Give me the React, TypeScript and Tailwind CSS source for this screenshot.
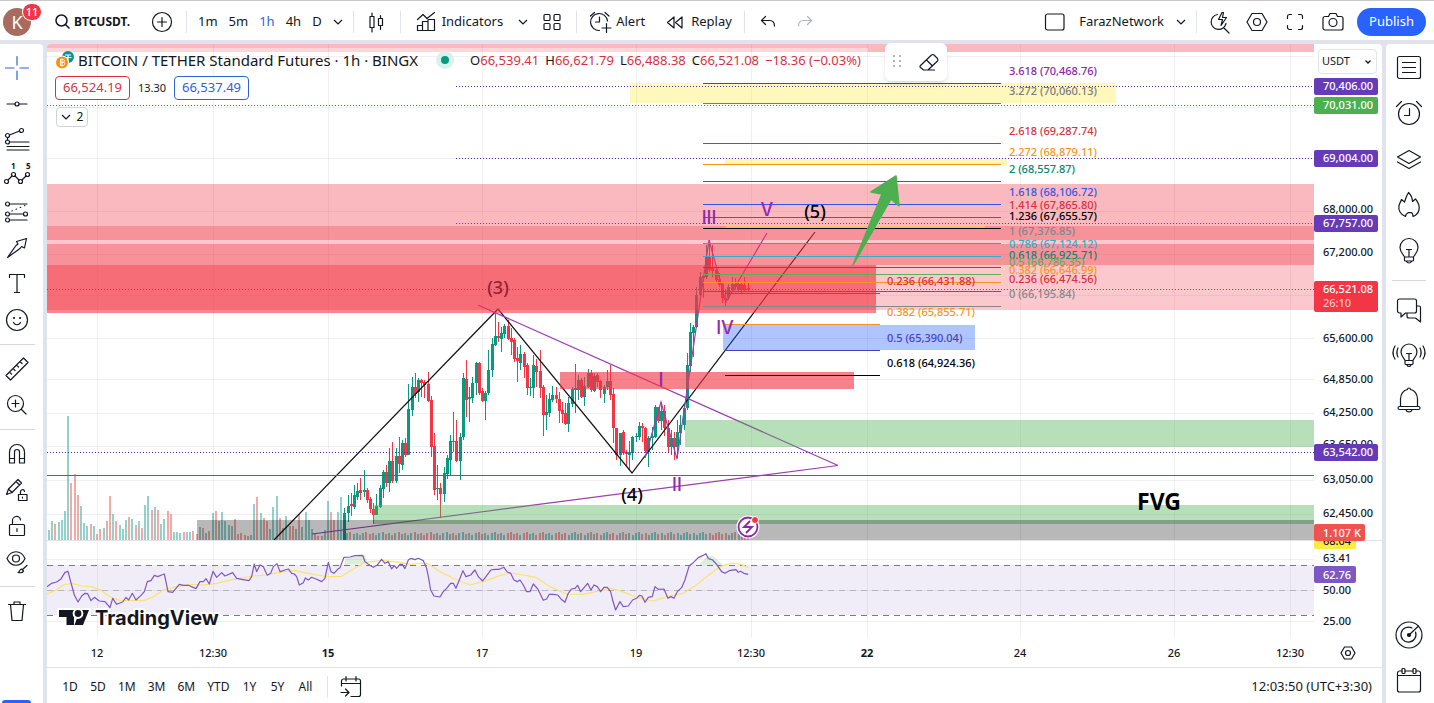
import React from 'react';

type IconProps = { children: React.ReactNode; size?: number; className?: string; width?: number };

function Icon({ children, size = 28, className = '', width = 1.2 }: IconProps) {
  return (
    <svg
      width={size}
      height={size}
      viewBox="0 0 28 28"
      fill="none"
      stroke="currentColor"
      strokeWidth={width}
      strokeLinecap="round"
      strokeLinejoin="round"
      className={`shrink-0 overflow-visible ${className}`}
      aria-hidden="true"
    >
      {children}
    </svg>
  );
}

function Chevron({ className = '' }: { className?: string }) {
  return (
    <svg width="10" height="6" viewBox="0 0 10 6" fill="none" stroke="currentColor" strokeWidth="1.2" className={`shrink-0 ${className}`} aria-hidden="true">
      <path d="M1 1l4 4 4-4" />
    </svg>
  );
}

function Divider({ className = '' }: { className?: string }) {
  return <span className={`h-[22px] w-px shrink-0 bg-[#e0e3eb] ${className}`} />;
}

// ---------------------------------------------------------------- chart data

// Candles as [open, high, low, close], in thirds of a pixel below y = 270
const CANDLES: [number, number, number, number][] = [
  [810, 715, 810, 730], [730, 675, 755, 707], [703, 670, 737, 709], [710, 645, 718, 676],
  [680, 640, 690, 663], [660, 625, 690, 668], [665, 600, 680, 660], [660, 655, 700, 690],
  [688, 680, 730, 718], [716, 700, 762, 735], [735, 672, 735, 708], [710, 645, 715, 655],
  [658, 600, 685, 605], [605, 585, 650, 640], [640, 535, 665, 573], [573, 515, 640, 633],
  [633, 535, 640, 558], [558, 500, 610, 583], [585, 510, 600, 519], [519, 505, 560, 555],
  [555, 342, 555, 418], [420, 320, 437, 350], [352, 308, 385, 372], [365, 325, 395, 330],
  [330, 328, 380, 338], [337, 330, 385, 345], [342, 305, 395, 392], [390, 378, 560, 530],
  [528, 490, 675, 660], [658, 585, 690, 655], [655, 640, 745, 672], [672, 590, 695, 608],
  [612, 555, 628, 565], [570, 495, 615, 512], [512, 427, 545, 516], [514, 450, 575, 572],
  [572, 490, 630, 500], [502, 310, 510, 325], [327, 270, 440, 390], [388, 350, 455, 380],
  [385, 320, 400, 340], [340, 275, 375, 278], [280, 275, 375, 368], [362, 355, 395, 392],
  [392, 362, 450, 368], [370, 240, 375, 300], [300, 205, 320, 222], [225, 128, 228, 198],
  [198, 155, 215, 204], [208, 170, 245, 188], [192, 163, 205, 168], [168, 150, 210, 206],
  [205, 175, 255, 215], [210, 205, 275, 268], [265, 230, 335, 272], [278, 225, 300, 252],
  [253, 245, 325, 290], [285, 280, 375, 353], [355, 325, 378, 350], [353, 255, 383, 285],
  [287, 268, 350, 305], [303, 240, 385, 353], [350, 345, 497, 435], [436, 375, 480, 426],
  [430, 370, 440, 388], [390, 348, 395, 375], [375, 350, 400, 388], [387, 365, 460, 422],
  [420, 395, 460, 432], [430, 400, 465, 462], [462, 380, 487, 400], [402, 350, 410, 358],
  [360, 283, 430, 355], [360, 315, 390, 330], [330, 325, 385, 380], [380, 320, 408, 348],
  [350, 298, 355, 308], [308, 300, 365, 360], [362, 310, 365, 318], [316, 310, 350, 335],
  [333, 330, 385, 360], [372, 345, 400, 350], [352, 300, 360, 333], [333, 285, 390, 375],
  [373, 355, 520, 475], [475, 475, 570, 555], [555, 488, 588, 488], [487, 480, 555, 548],
  [546, 540, 590, 553], [555, 512, 600, 547], [550, 498, 570, 500], [502, 490, 515, 498],
  [500, 455, 510, 467], [467, 460, 515, 475], [474, 472, 550, 543], [545, 498, 590, 503],
  [503, 470, 540, 498], [500, 405, 505, 412], [412, 410, 460, 452], [453, 396, 480, 423],
  [423, 405, 498, 474], [474, 450, 546, 531], [531, 480, 555, 504], [504, 486, 570, 531],
  [531, 450, 564, 486], [490, 435, 525, 465], [465, 400, 480, 414], [414, 250, 420, 285],
  [287, 160, 305, 187], [190, 165, 260, 170], [172, 50, 175, 75], [75, 5, 90, 22],
  [25, 12, 85, 18], [22, -75, 28, -40], [-40, -90, 5, 0], [-5, -75, 20, 3],
  [0, -5, 40, 30], [28, 10, 50, 45], [43, 35, 100, 85], [85, 60, 107, 90],
  [85, 43, 90, 50], [60, 22, 65, 43], [42, 25, 60, 50], [60, 30, 65, 43],
  [43, 35, 72, 60], [45, 22, 63, 60], [53, 40, 62, 60],
];

// Volume of the bars before the first candle; negative is a falling bar
const VOLUME = [
  30, 57, -48, 55, 60, 87, 372, -172, -198, -134, 102, 52, 42, -48, 42, -18, -33, 36, -58, -132, 78, -57, 45,
  32, 60, -70, 62, -45, 58, -35, 105, 132, -90, 99, -90, 48, 63, -87, -79, 24, 24, 22, -24, 24, 24, -28, -18,
  40, -36, 22, -27, 80, -87, 58, 84, 58, 45, 42, -64, -18, -21, -15, -12, 15, 109, -129, 82, -67, -58, 32, 100,
  132, -67, 36, 72, -42, -42, 34, -77, 39, 85, 60, 32, -18, -12, -12, 30, 117, -84, -60, 85, 130,
];

const RSI =
  '21,560 35,550 50,546 62,538 75,517 84,514 92,545 103,585 114,606 125,588 135,580 143,581 153,602 163,592 178,603 195,605 210,623 218,595 230,613 248,606 258,592 266,600 277,580 288,600 303,586 313,575 322,545 333,542 343,526 353,530 363,526 373,522 384,575 398,577 418,553 430,556 445,556 468,566 480,545 490,545 498,536 508,552 519,514 530,532 545,518 555,528 578,518 590,535 605,538 627,542 635,530 643,492 650,515 660,495 670,500 682,526 692,520 700,500 711,491 720,515 735,510 745,507 755,520 763,522 770,530 778,555 790,548 796,534 805,540 815,532 830,538 845,545 855,535 865,487 873,515 882,520 893,508 900,503 912,472 930,471 945,467 968,466 975,485 985,493 1000,502 1012,495 1025,478 1035,490 1045,485 1055,507 1063,497 1070,505 1080,493 1087,493 1095,506 1105,480 1113,475 1125,479 1135,475 1150,482 1160,505 1167,540 1172,570 1182,588 1200,591 1210,575 1220,565 1232,550 1240,550 1248,565 1258,540 1269,512 1278,530 1292,525 1305,510 1315,530 1328,543 1338,530 1353,510 1365,508 1378,508 1392,502 1402,516 1412,520 1422,540 1432,545 1440,540 1450,555 1460,575 1470,575 1480,552 1492,565 1500,580 1510,601 1520,597 1528,583 1540,583 1553,585 1563,597 1575,607 1585,580 1595,567 1605,565 1613,556 1622,575 1633,562 1643,550 1653,570 1662,555 1672,560 1682,575 1692,562 1702,562 1712,575 1718,600 1727,630 1740,605 1750,620 1765,618 1778,600 1790,595 1798,586 1806,588 1815,607 1825,592 1837,590 1845,560 1855,568 1872,567 1884,595 1893,590 1902,595 1912,575 1925,563 1935,540 1948,497 1960,488 1975,473 1988,467 1998,461 2005,475 2018,480 2030,493 2045,515 2055,520 2068,512 2088,509 2095,517 2102,514 2112,520 2125,523';

const RSI_AVERAGE =
  '21,582 45,572 70,555 95,550 125,558 155,560 185,572 215,593 240,601 310,602 335,593 370,570 410,560 450,553 490,555 530,550 580,538 640,528 680,525 720,517 765,511 790,517 830,525 860,530 905,529 935,510 975,488 1025,481 1065,485 1110,493 1160,489 1200,515 1240,535 1290,555 1330,545 1380,527 1410,519 1450,525 1490,533 1530,560 1580,582 1630,583 1680,572 1710,565 1740,572 1790,592 1840,603 1880,590 1930,580 1970,555 2000,530 2040,500 2075,489 2105,494 2125,503';

const RED = '#f23645';
const CRIMSON = '#d9303f';
const GREEN = '#4caf50';
const YELLOW = '#ffeb3b';
const VIOLET = '#4a2a9c';

// x, y, width, height, colour, opacity
const BANDS: [number, number, number, number, string, number][] = [
  [47, 44, 1267, 4, RED, 0.35],
  [868, 48, 446, 4, RED, 0.35],
  [47, 48, 821, 4, RED, 0.2],
  [47, 184, 1267, 42, RED, 0.35],
  [47, 226, 1267, 14, RED, 0.54],
  [47, 240, 1267, 4, RED, 0.27],
  [47, 244, 1267, 21, RED, 0.54],
  [47, 265, 829, 45, RED, 0.73],
  [876, 265, 438, 45, RED, 0.27],
  [47, 310, 829, 3, RED, 0.6],
  [560, 372, 294, 17, RED, 0.62],
  [630, 83, 486, 20, YELLOW, 0.35],
  [725, 159, 282, 6, YELLOW, 0.4],
  [726, 225, 259, 3, '#ffd54f', 0.6],
  [723, 325, 252, 25, '#2962ff', 0.37],
  [685, 420, 629, 27, GREEN, 0.4],
  [373, 505, 941, 19, GREEN, 0.4],
  [197, 520, 1117, 20, '#000000', 0.28],
];

// line y, label y, colour, label
const UPPER_FIB: [number, number, string, string][] = [
  [83, 71, '#8e24aa', '3.618 (70,468.76)'],
  [103, 91, '#787b86', '3.272 (70,060.13)'],
  [143, 131, CRIMSON, '2.618 (69,287.74)'],
  [164, 152, '#f7941d', '2.272 (68,879.11)'],
  [181, 169, '#088673', '2 (68,557.87)'],
  [204, 192, '#3355e8', '1.618 (68,106.72)'],
  [217, 205, CRIMSON, '1.414 (67,865.80)'],
  [228, 216, '#000000', '1.236 (67,655.57)'],
  [243, 231, '#85858e', '1 (67,376.85)'],
  [256, 244, '#2cb0cc', '0.786 (67,124.12)'],
  [267, 255, '#14806f', '0.618 (66,925.71)'],
  [274, 262, '#5fae58', '0.5 (66,786.35)'],
  [282, 270, '#f7941d', '0.382 (66,646.99)'],
  [291, 279, CRIMSON, '0.236 (66,474.56)'],
  [306, 294, '#85858e', '0 (66,195.84)'],
];

const LOWER_FIB: [number, number, string, string][] = [
  [293, 281, CRIMSON, '0.236 (66,431.88)'],
  [324, 312, '#f7941d', '0.382 (65,855.71)'],
  [350, 338, '#4a3fc0', '0.5 (65,390.04)'],
  [375, 363, '#000000', '0.618 (64,924.36)'],
];

const DOTTED: [number, number, string][] = [
  [456, 86, VIOLET],
  [47, 105, '#388e3c'],
  [456, 158, VIOLET],
  [456, 223, '#8e24aa'],
  [47, 289, CRIMSON],
  [47, 452, VIOLET],
];

const PRICES: [number, string][] = [
  [209, '68,000.00'], [252, '67,200.00'], [338, '65,600.00'], [379, '64,850.00'], [412, '64,250.00'],
  [444, '63,650.00'], [479, '63,050.00'], [513, '62,450.00'], [558, '63.41'], [590, '50.00'], [621, '25.00'],
];

const PRICE_TAGS: [number, string, string][] = [
  [86, '70,406.00', '#673ab7'],
  [105, '70,031.00', '#4caf50'],
  [158, '69,004.00', '#673ab7'],
  [223, '67,757.00', '#673ab7'],
  [452, '63,542.00', '#673ab7'],
];

const TIMES: [number, string, boolean][] = [
  [97, '12', false], [213, '12:30', false], [328, '15', true], [482, '17', false], [636, '19', false],
  [751, '12:30', false], [867, '22', true], [1020, '24', false], [1174, '26', false], [1290, '12:30', false],
];

const WAVES: [number, number, string, string][] = [
  [498, 294, '(3)', '#96202f'],
  [632, 501, '(4)', '#000000'],
  [815, 218, '(5)', '#000000'],
];

const SUB_WAVES: [number, number, string][] = [
  [661, 386, 'I'], [677, 491, 'II'], [709, 224, 'III'], [725, 334, 'IV'], [767, 216, 'V'],
];

// ---------------------------------------------------------------- chart

function Candles() {
  return (
    <g shapeRendering="crispEdges">
      {CANDLES.map(([open, high, low, close], i) => {
        const x = Math.round(344.3 + i * 3.2);
        const y = (v: number) => Math.round(270 + v / 3);
        const color = close < open ? '#089981' : RED;
        const top = y(Math.min(open, close));
        const bottom = y(Math.max(open, close));
        return (
          <g key={i} fill={color}>
            <rect x={x} y={y(high)} width={1} height={y(low) - y(high)} />
            <rect x={x - 1} y={top} width={3} height={Math.max(bottom - top, 1)} />
          </g>
        );
      })}
    </g>
  );
}

function VolumeBars() {
  const later = CANDLES.map(([open, , , close], i) => (16 + ((i * 7) % 5) * 2) * (close < open ? 1 : -1));
  return (
    <g shapeRendering="crispEdges" opacity={0.5}>
      {[...VOLUME, ...later].map((v, i) => {
        const h = Math.round(Math.abs(v) / 3);
        return <rect key={i} x={Math.round(48 + i * 3.207)} y={540 - h} width={2} height={h} fill={v > 0 ? '#26a69a' : '#ef5350'} />;
      })}
    </g>
  );
}

function Fib({ rows, x, width, labelX }: { rows: [number, number, string, string][]; x: number; width: number; labelX: number }) {
  return (
    <g>
      {rows.map(([y, labelY, color, label]) => (
        <g key={label}>
          <rect x={x} y={y} width={width} height={1} fill={color} shapeRendering="crispEdges" />
          <text x={labelX} y={labelY + 4} fill={color}>{label}</text>
        </g>
      ))}
    </g>
  );
}

function Rsi() {
  return (
    <g fill="none">
      <rect x={47} y={565} width={1267} height={50} fill="#7e57c2" fillOpacity={0.11} />
      <g strokeDasharray="6 5" shapeRendering="crispEdges">
        <path d="M47 565.5h1267M47 615.5h1267" stroke="#787b86" />
        <path d="M47 590.5h1267" stroke="#b5b4c2" />
      </g>
      <path d="M344 565l2-7 19-3 3 9zM699 565l8-9 6 0 10 9z" fill="#4caf50" fillOpacity={0.2} />
      <g transform="translate(40 400) scale(0.3333)" strokeWidth={3.6} strokeLinejoin="round">
        <polyline points={RSI_AVERAGE} stroke="#fbe36a" />
        <polyline points={RSI} stroke="#7e57c2" />
      </g>
    </g>
  );
}

function PriceAxis() {
  return (
    <g fontSize={11} fontWeight={500} fill="#131722">
      {PRICES.map(([y, label]) => (
        <text key={label} x={1323} y={y + 4}>{label}</text>
      ))}
      {PRICE_TAGS.map(([y, label, color]) => (
        <g key={label}>
          <rect x={1314} y={y - 8} width={64} height={17} rx={2} fill={color} />
          <text x={1323} y={y + 4} fill="#fff">{label}</text>
        </g>
      ))}
      <rect x={1314} y={281} width={64} height={31} rx={2} fill={RED} />
      <text x={1323} y={293} fill="#fff">66,521.08</text>
      <text x={1323} y={307} fill="#fff" fillOpacity={0.7}>26:10</text>
      <rect x={1314} y={533} width={42} height={16} rx={2} fill={YELLOW} />
      <text x={1323} y={545}>68.04</text>
      <rect x={1314} y={524} width={51} height={17} rx={2} fill="#ef5350" />
      <text x={1323} y={537} fill="#fff">1.107 K</text>
      <rect x={1314} y={566} width={42} height={17} rx={2} fill="#7e57c2" />
      <text x={1323} y={579} fill="#fff">62.76</text>
    </g>
  );
}

function Chart() {
  return (
    <svg viewBox="47 44 1335 623" className="h-auto w-full font-['Noto_Sans','Open_Sans',sans-serif]" role="img" aria-label="BTCUSDT one hour chart">
      <g fill="#2a2e39" fillOpacity={0.07} shapeRendering="crispEdges">
        {TIMES.map(([x]) => <rect key={x} x={x} y={44} width={1} height={594} />)}
        {[56, 107, 158, 211, 254, 295, 338, 379, 413, 446, 480, 514, 559, 590, 621].map((y) => (
          <rect key={y} x={47} y={y} width={1267} height={1} />
        ))}
      </g>
      <VolumeBars />
      <Candles />

      <g fill="none" strokeWidth={1.2}>
        <path d="M274 540L498 309 632 473 815 232" stroke="#111" />
        <path d="M478 305l360 160.500M312 534l526-68.500" stroke="#9c3fb0" />
        <path d="M645 458l16-56 16 57 32-219 17 62 41-69" stroke="#9c3fb0" />
      </g>
      <rect x={47} y={475} width={1267} height={1} fill={CRIMSON} shapeRendering="crispEdges" />

      <g shapeRendering="crispEdges">
        {BANDS.map(([x, y, w, h, color, opacity], i) => (
          <rect key={i} x={x} y={y} width={w} height={h} fill={color} fillOpacity={opacity} />
        ))}
      </g>
      <g shapeRendering="crispEdges" strokeDasharray="1 2">
        {DOTTED.map(([x, y, color]) => (
          <line key={y} x1={x} x2={1314} y1={y + 0.5} y2={y + 0.5} stroke={color} />
        ))}
      </g>

      <g fontSize={11} fontWeight={500}>
        <Fib rows={UPPER_FIB} x={703} width={298} labelX={1009} />
        <Fib rows={LOWER_FIB} x={725} width={155} labelX={887} />
      </g>
      <path d="M853 265L882 194 871 192 896 176 899 206 891 199z" fill={GREEN} stroke={GREEN} strokeWidth={1.5} strokeLinejoin="round" />

      <g fontSize={18} textAnchor="middle">
        {WAVES.map(([x, y, label, color]) => <text key={label} x={x} y={y} fill={color} fontWeight={500}>{label}</text>)}
        <g fill="#9227b0" fontWeight={500}>
          {SUB_WAVES.map(([x, y, label]) => (
            <text key={label} x={x} y={y} className="font-['Inter',sans-serif]">{label}</text>
          ))}
        </g>
      </g>
      <text x={1159} y={510} fontSize={23} fontWeight={700} textAnchor="middle">FVG</text>

      <circle cx={748} cy={527} r={11.500} fill="#fff" />
      <circle cx={748} cy={527} r={9.500} fill="#fff" stroke="#8e24aa" strokeWidth={1.800} />
      <path d="M750 521l-6 6h8l-6 6" fill="none" stroke="#8e24aa" strokeWidth={1.800} />
      <circle cx={755} cy={520} r={3.500} fill={RED} stroke="#fff" />

      <Rsi />
      <rect x={47} y={540} width={1335} height={1} fill="#e0e3eb" />
      <PriceAxis />

      <g fontSize={11} textAnchor="middle" fill="#131722">
        {TIMES.map(([x, label, bold]) => (
          <text key={x} x={x} y={657} fontWeight={bold ? 700 : 500}>{label}</text>
        ))}
      </g>

      <g fill="#131722" stroke="#fff" strokeWidth={4} strokeLinejoin="round" paintOrder="stroke">
        <path d="M59 610h15v15h-7.500v-8H59zM80 610h9l-6 15h-8.500z" />
        <circle cx={78} cy={613.500} r={3.400} />
        <text x={95} y={625} fontSize={20} fontWeight={700} className="font-['Inter',sans-serif]">TradingView</text>
      </g>
    </svg>
  );
}

function Ohlc({ name, value }: { name: string; value: string }) {
  return <span className="text-[#131722]">{name}<span className="text-[#d9303f]">{value}</span></span>;
}

function Legend() {
  return (
    <div className="absolute top-[5px] left-2 flex flex-col items-start text-[#131722]">
      <div className="flex h-[22px] items-center whitespace-nowrap">
        <svg width="20" height="20" viewBox="0 0 20 20" aria-hidden="true">
          <circle cx="13" cy="7" r="6" fill="#0b9393" />
          <path d="M10 5h6M13 5v5M9.500 7.500h7" stroke="#fff" strokeWidth="1.200" />
          <circle cx="7" cy="12.500" r="7" fill="#fff" />
          <circle cx="7" cy="12.500" r="6" fill="#f7931a" />
          <path d="M5.500 9.500v6M5 9.500h3c2 0 2 2.800 0 2.800H6M8 12.300c2.300 0 2 3.200 0 3.200H5M7 8.500v8" stroke="#fff" fill="none" strokeWidth=".9" />
        </svg>
        <h1 className="ml-[3px] text-[15px]">BITCOIN / TETHER Standard Futures · 1h · BINGX</h1>
        <span className="ml-[18px] flex size-[18px] items-center justify-center rounded-full bg-[#d9f1ec]">
          <span className="size-2 rounded-full bg-[#089981]" />
        </span>
        <div className="ml-4 flex gap-1.5 pt-0.5 text-[13px]">
          <Ohlc name="O" value="66,539.41" />
          <Ohlc name="H" value="66,621.79" />
          <Ohlc name="L" value="66,488.38" />
          <Ohlc name="C" value="66,521.08" />
          <span className="text-[#d9303f]">−18.36 (−0.03%)</span>
        </div>
      </div>
      <div className="mt-[5px] flex items-center text-[13px]">
        <button className="h-6 w-[75px] rounded border border-[#d9303f] bg-white text-[#d9303f]">66,524.19</button>
        <span className="w-11 text-center text-[11px]">13.30</span>
        <button className="h-6 w-[75px] rounded border border-[#2f62d9] bg-white text-[#2f5fe0]">66,537.49</button>
      </div>
      <button className="mt-[7px] ml-px flex h-5 w-8 items-center justify-center gap-1.5 rounded-sm border border-[#d1d4dc] bg-white text-xs">
        <Chevron />2
      </button>
    </div>
  );
}

// ---------------------------------------------------------------- bars

function TopBar() {
  return (
    <header className="flex h-10 shrink-0 items-center border-t border-[#c9c9c9] bg-white pt-0.5 text-[13px] whitespace-nowrap">
      <button className="relative ml-[3px] size-7 shrink-0 rounded-full bg-[#a56c5f] text-lg text-white" aria-label="Account">
        K
        <span className="absolute -top-1 left-5 flex h-4 w-[18px] items-center justify-center rounded-full bg-[#f23645] text-[11px] font-medium ring-1 ring-white">11</span>
      </button>
      <button className="ml-6 flex w-[78px] items-center gap-1 text-xs font-bold">
        <svg width="15" height="15" viewBox="0 0 15 15" fill="none" stroke="currentColor" strokeWidth="1.500" className="shrink-0" aria-hidden="true">
          <circle cx="6.500" cy="6.500" r="5.500" /><path d="M10.500 10.500l4 4" />
        </svg>
        BTCUSDT.
      </button>
      <button className="ml-[15px]" aria-label="Compare">
        <Icon><circle cx="14" cy="14" r="9.500" /><path d="M14 9.500v9M9.500 14h9" /></Icon>
      </button>
      <Divider className="ml-2.5" />
      <nav className="ml-[11px] flex items-center gap-[11px]" aria-label="Interval">
        <button>1m</button>
        <button>5m</button>
        <button className="text-[#2f62e8]">1h</button>
        <button>4h</button>
        <button>D</button>
        <button aria-label="More intervals"><Chevron /></button>
      </nav>
      <Divider className="ml-2.5" />
      <button className="ml-2" aria-label="Candles">
        <Icon>
          <path d="M8 8.500h4v11H8zM10 5v3.500M10 19.500V24M16.500 10.500h4v7h-4zM18.500 7.500v3M18.500 17.500v4" />
        </Icon>
      </button>
      <Divider className="ml-2.5" />
      <button className="ml-[11px] flex items-center gap-0.5">
        <Icon><path d="M5.500 11.500l5.500-5 4 4 7.500-6M5.500 22.500v-5h5v5zM10.500 22.500v-9h5.500v9M16 16.500h0M16 22.500v-11h6.500v11zM5.500 22.500h17" /></Icon>
        Indicators
      </button>
      <button className="ml-[15px]" aria-label="Favorite indicators"><Chevron /></button>
      <button className="ml-2.5" aria-label="Templates">
        <Icon>
          <rect x="6" y="6.500" width="6" height="6" rx="1" /><rect x="16" y="6.500" width="6" height="6" rx="1" />
          <rect x="6" y="15.500" width="6" height="6" rx="1" /><rect x="16" y="15.500" width="6" height="6" rx="1" />
        </Icon>
      </button>
      <Divider className="ml-2.5" />
      <button className="ml-[9px] flex items-center gap-0.5">
        <Icon>
          <path d="M21.500 13a8.500 8.500 0 1 0-8 9.500M13.500 9v5h-4M4.500 8l4-3.500M19 4.500L23 8M20.500 15.500v9M16 20h9" />
        </Icon>
        Alert
      </button>
      <button className="ml-4 flex items-center gap-0.5">
        <Icon><path d="M13 9v11l-6.500-5.500zM21 9v11l-6.500-5.500z" /></Icon>
        Replay
      </button>
      <Divider className="ml-3" />
      <button className="ml-[9px]" aria-label="Undo">
        <Icon><path d="M11.500 8.500L7.500 12.500l4 4M7.500 12.500h8c3 0 5 2 5 5.500" /></Icon>
      </button>
      <button className="ml-[9px] text-[#b2b5be]" aria-label="Redo">
        <Icon><path d="M16.500 8.500l4 4-4 4M20.500 12.500h-8c-3 0-5 2-5 5.500" /></Icon>
      </button>
      <div className="ml-auto flex items-center">
        <button aria-label="Layout setup">
          <Icon><rect x="4.500" y="6" width="18.500" height="16" rx="2" /></Icon>
        </button>
        <button className="ml-2.5 flex items-center gap-3">FarazNetwork<Chevron /></button>
        <Divider className="ml-2.5" />
        <div className="ml-2 flex gap-2.5">
          <button aria-label="Quick search">
            <Icon><path d="M12.500 6.500a7.500 7.500 0 1 0 8.500 9M19 20l5 5M17 4.500l-3.500 7h4l-1.500 6 5.500-8h-4l1-5z" /></Icon>
          </button>
          <button aria-label="Settings">
            <Icon><path d="M9 5.500h10l5 8.500-5 8.500H9L4 14z" /><circle cx="14" cy="14" r="3.500" /></Icon>
          </button>
          <button aria-label="Fullscreen">
            <Icon><path d="M6.500 10.500v-2a2 2 0 0 1 2-2h2M17.500 6.500h2a2 2 0 0 1 2 2v2M21.500 17.500v2a2 2 0 0 1-2 2h-2M10.500 21.500h-2a2 2 0 0 1-2-2v-2" /></Icon>
          </button>
          <button aria-label="Take a snapshot">
            <Icon><path d="M9.500 8.500l1.500-3h6l1.500 3H22a2 2 0 0 1 2 2V20a2 2 0 0 1-2 2H6a2 2 0 0 1-2-2v-9.500a2 2 0 0 1 2-2z" /><circle cx="14" cy="14.500" r="4" /></Icon>
          </button>
        </div>
        <button className="mr-2 ml-2.5 h-7 w-[69px] rounded-full bg-[#2962ff] text-[13px] text-white">Publish</button>
      </div>
    </header>
  );
}

function ToolButton({ label, className = '', children }: { label: string; className?: string; children: React.ReactNode }) {
  return (
    <button aria-label={label} className={`flex h-9 w-[34px] shrink-0 items-center justify-center ${className}`}>
      <Icon>{children}</Icon>
    </button>
  );
}

function ToolDivider() {
  return <span className="my-1.5 h-px w-[35px] shrink-0 bg-[#d5d8e0]" />;
}

function DrawingBar() {
  return (
    <aside className="flex w-[43px] shrink-0 flex-col overflow-hidden rounded-tr bg-white pt-1.5 text-[#131722]">
      <ToolButton label="Cross" className="text-[#2f62d9]"><path d="M14 2.500v8.500M14 17v8.500M2.500 14H11M17 14h8.500" /></ToolButton>
      <ToolButton label="Trend line"><path d="M4 14h8M16 14h8" /><circle cx="14" cy="14" r="2" /></ToolButton>
      <ToolButton label="Gann and Fibonacci">
        <circle cx="18.500" cy="4.500" r="2" /><circle cx="4.500" cy="9.500" r="2" /><circle cx="4.500" cy="16" r="2" />
        <path d="M6.500 9l10-4M4.500 11.500V14M6.500 16H26M4 20.500h22M4 24h22" />
      </ToolButton>
      <ToolButton label="Patterns">
        <circle cx="3.500" cy="19.500" r="2" /><circle cx="10.500" cy="12.500" r="2" /><circle cx="17.500" cy="19.500" r="2" /><circle cx="24.500" cy="12.500" r="2" />
        <path d="M5 18l4-4M12 14l4 4M19 18l4-4" />
        <text x="8" y="7" fontSize="8" fontWeight="700" fill="currentColor" stroke="none">1</text>
        <text x="23" y="7" fontSize="8" fontWeight="700" fill="currentColor" stroke="none">5</text>
      </ToolButton>
      <ToolButton label="Prediction tools">
        <circle cx="4.500" cy="6" r="2" /><circle cx="4.500" cy="16" r="2" /><circle cx="22.500" cy="16" r="2" /><circle cx="4.500" cy="22" r="2" />
        <path d="M6.500 6H24M6.500 16h14M6.500 22H24" /><path d="M9 13l14-6" strokeDasharray="0.5 4" />
      </ToolButton>
      <ToolButton label="Arrow"><path d="M4.500 23.500L13 11.500l2-1.500-1.500-2.500 10-3-2 9.500-3-1.500-1.500 2z" /></ToolButton>
      <ToolButton label="Text"><path d="M6.500 7.500v-3h15v3M14 4.500v18M11.500 22.500h5" /></ToolButton>
      <ToolButton label="Icons">
        <circle cx="14" cy="14" r="10.500" /><path d="M10.500 16.500c1.500 3 5.500 3 7 0" />
        <path d="M11 12h.1M17 12h.1" strokeWidth="2" />
      </ToolButton>
      <ToolDivider />
      <ToolButton label="Measure">
        <path d="M3 20.500L20.500 3l4.500 4.500L7.500 25zM6.500 17l2 2M10 13.500l2 2M13.500 10l2 2M17 6.500l2 2" />
      </ToolButton>
      <ToolButton label="Zoom in"><circle cx="12.500" cy="12.500" r="8" /><path d="M18.500 18.500l4.500 4.500M12.500 9v7M9 12.500h7" /></ToolButton>
      <ToolDivider />
      <ToolButton label="Magnet">
        <path d="M6.500 23V12a7.500 7.500 0 0 1 15 0v11h-5V12a2.500 2.500 0 0 0-5 0v11zM6.500 18.500h5M16.500 18.500h5" />
      </ToolButton>
      <ToolButton label="Keep drawing">
        <path d="M3.500 18.500l2-5.500L15 3.500l3.500 3.500L9 16.500zM5.500 13L9 16.500M13 5.500L16.500 9M15.500 18.500h8.500v6h-8.500zM17.500 18.500V16a2 2 0 0 1 4-.5M19.500 21v1" />
      </ToolButton>
      <ToolButton label="Lock drawings">
        <path d="M7.500 12.500h13a1 1 0 0 1 1 1v9a1 1 0 0 1-1 1h-13a1 1 0 0 1-1-1v-9a1 1 0 0 1 1-1zM9.500 12.500V9a4 4 0 0 1 8-1M14 16.500v3" />
      </ToolButton>
      <ToolButton label="Hide drawings">
        <path d="M4 10.500c4-9 14-9 18 0-4 9-14 9-18 0z" /><circle cx="13" cy="10.500" r="3.500" />
        <path d="M15 24.500c2 0 1-3 3.500-3.500l2 2c-.5 1.500-3 2-5.500 1.500zM20 21l4-3.500" />
      </ToolButton>
      <ToolDivider />
      <ToolButton label="Remove objects"><path d="M5.500 7.500h17M11 7.500V5h6v2.500M7.500 7.500L9 23.500h10l1.500-16" /></ToolButton>
      <span className="mt-auto ml-0.5 h-[3px] w-[29px] shrink-0 rounded-t bg-[#2962ff]" />
    </aside>
  );
}

function SideButton({ label, className = 'h-[45px]', children }: { label: string; className?: string; children: React.ReactNode }) {
  return (
    <button aria-label={label} className={`flex shrink-0 items-center justify-center ${className}`}>
      <Icon>{children}</Icon>
    </button>
  );
}

function WidgetBar() {
  return (
    <aside className="flex w-12 shrink-0 flex-col rounded-tl bg-white pr-0.5 pb-px text-[#131722]">
      <SideButton label="Watchlist" className="h-[46px]">
        <rect x="2.500" y="3.500" width="23" height="22" rx="2" /><path d="M7.500 9.500h13M7.500 14.500h13M7.500 19.500h13" />
      </SideButton>
      <SideButton label="Alerts" className="h-[46px]">
        <circle cx="14" cy="15" r="10.500" /><path d="M14.500 9.500v7h-5M1.500 7.500l5-5M26.500 7.500l-5-5" />
      </SideButton>
      <SideButton label="Object tree" className="h-[46px]">
        <path d="M14 5.500l11.500 6.500L14 18.500 2.500 12zM2.500 17L14 23.500 25.500 17" />
      </SideButton>
      <SideButton label="Hotlists" className="h-[46px]">
        <path d="M10.500 25.500C5.500 23.500 3 19 4 14.500c.8-3 2-4 2.500-6l3 2.500c1.500-4 2-6.500 4-9.500 3 3 4 6 4 9l3-2.500c2.500 3 4.500 7 3.500 11-.8 3-3 5.500-6 6.500 0-2-.5-3.500-1.500-4-1.500.5-2 0-3 0-1.500.8-3 2.500-3 4z" />
      </SideButton>
      <SideButton label="Ideas" className="h-[46px]">
        <path d="M9.500 20c0-1.500-4.500-4-4.500-9.500a9 9 0 0 1 18 0c0 5.500-4.500 8-4.500 9.500zM9.500 20v3a1 1 0 0 0 1 1h7a1 1 0 0 0 1-1v-3M11.500 24.500c1 2 4 2 5 0M11.500 12.500h5M14 12.500V20" />
      </SideButton>
      <span className="mx-1.5 my-1.5 h-px shrink-0 bg-[#d5d8e0]" />
      <SideButton label="Chats">
        <path d="M4.500 3h15a2 2 0 0 1 2 2v10a2 2 0 0 1-2 2h-9l-4.500 4v-4H4.500a2 2 0 0 1-2-2V5a2 2 0 0 1 2-2zM21.500 10H24a1.500 1.500 0 0 1 1.500 1.500V26l-5-4H14a2 2 0 0 1-2-2v-3" />
      </SideButton>
      <SideButton label="Ideas stream">
        <path d="M10 19.500c0-1.500-4-4-4-8.500a8 8 0 0 1 16 0c0 4.500-4 7-4 8.500zM10 19.500v3a1 1 0 0 0 1 1h6a1 1 0 0 0 1-1v-3M12 24c.8 2 3.200 2 4 0M11.500 12.500h5M14 12.500v7M3 7c-1.500 3-1.500 6 0 9M0 5c-2.500 4-2.500 9 0 13M25 7c1.500 3 1.500 6 0 9M28 5c2.500 4 2.500 9 0 13" />
      </SideButton>
      <SideButton label="Notifications">
        <path d="M5.500 20.500V13c0-5 3-9 7-9.500 0-2 3-2 3 0 4 .5 7 4.500 7 9.500v7.500M4.500 20.500h19a1 1 0 0 1 0 3h-19a1 1 0 0 1 0-3zM11 24c1 2.500 5 2.500 6 0" />
      </SideButton>
      <div className="mt-auto flex flex-col">
        <SideButton label="Order panel">
          <circle cx="14" cy="14" r="13" /><path d="M20.500 11a7.500 7.500 0 1 1-3.500-4M14 14l9.500-9" /><circle cx="14" cy="14" r="1.500" fill="currentColor" />
        </SideButton>
        <SideButton label="Calendar">
          <path d="M7 5H4.500a2 2 0 0 0-2 2v17a2 2 0 0 0 2 2h19a2 2 0 0 0 2-2V7a2 2 0 0 0-2-2H21M10 5h8M2.500 9.500h23" />
          <rect x="7" y="2.500" width="3" height="5" rx="1" /><rect x="18" y="2.500" width="3" height="5" rx="1" />
        </SideButton>
      </div>
    </aside>
  );
}

const RANGES = ['1D', '5D', '1M', '3M', '6M', 'YTD', '1Y', '5Y', 'All'];

export default function App() {
  return (
    <div className="flex min-h-screen flex-col bg-[#e0e3eb] font-['Noto_Sans','Open_Sans',sans-serif] text-[#131722]">
      <TopBar />
      <div className="mt-1 flex flex-1 gap-1">
        <DrawingBar />
        <main className="flex min-w-0 flex-1 flex-col overflow-hidden rounded-t bg-white">
          <div className="relative">
            <Chart />
            <Legend />
            <div className="absolute top-[5px] right-[5px] flex h-[25px] w-[59px] items-center rounded border border-[#e0e3eb] bg-white">
              <select aria-label="Currency" className="w-full appearance-none bg-transparent pl-[3px] text-[11px]">
                <option>USDT</option>
                <option>BTC</option>
              </select>
              <svg width="8" height="6" viewBox="0 0 8 6" fill="none" stroke="currentColor" strokeWidth="1.300" className="pointer-events-none absolute right-1" aria-hidden="true">
                <path d="M1.500 1.500L4 4l2.500-2.500" />
              </svg>
            </div>
            <button className="absolute right-5 bottom-0" aria-label="Axis settings">
              <svg width="28" height="28" viewBox="0 0 28 28" fill="none" stroke="currentColor" strokeWidth="1.200" aria-hidden="true">
                <path d="M10.500 8h7l3.500 6-3.500 6h-7L7 14z" /><circle cx="14" cy="14" r="2.500" />
              </svg>
            </button>
          </div>
          <footer className="flex h-9 items-center border-t border-[#e0e3eb] pt-0.5 pr-2.5 pl-[15px] text-[13px] whitespace-nowrap">
            <div className="flex gap-3 text-xs">
              {RANGES.map((range) => <button key={range} className="min-w-4">{range}</button>)}
            </div>
            <Divider className="ml-3.5" />
            <button className="ml-[9px]" aria-label="Go to date">
              <Icon><path d="M4.500 13v-5a2 2 0 0 1 2-2h15a2 2 0 0 1 2 2v13.500a2 2 0 0 1-2 2H14M4.500 10.500h19M9 3.500V8M19 3.500V8M4 19.500h7.500M8.500 16l3.500 3.500L8.500 23" /></Icon>
            </button>
            <button className="ml-auto">12:03:50 (UTC+3:30)</button>
          </footer>
        </main>
        <WidgetBar />
      </div>
      <div className="absolute top-[43px] left-[885px] flex h-[38px] w-[62px] items-center rounded-md bg-white shadow-md">
        <svg width="10" height="14" viewBox="0 0 10 14" fill="#b2b5be" className="ml-2" aria-hidden="true">
          <path d="M0 0h2v2H0zM6 0h2v2H6zM0 5h2v2H0zM6 5h2v2H6zM0 10h2v2H0zM6 10h2v2H6z" />
        </svg>
        <button className="ml-3" aria-label="Eraser">
          <Icon><path d="M5.500 17.500l11-10.500a2 2 0 0 1 2.500 0l3.500 3.500a2 2 0 0 1 0 2.500L13 22H8.500L5 19a1.500 1.500 0 0 1 .5-1.500zM11.500 12l6 6M8.500 22h11" /></Icon>
        </button>
      </div>
    </div>
  );
}
